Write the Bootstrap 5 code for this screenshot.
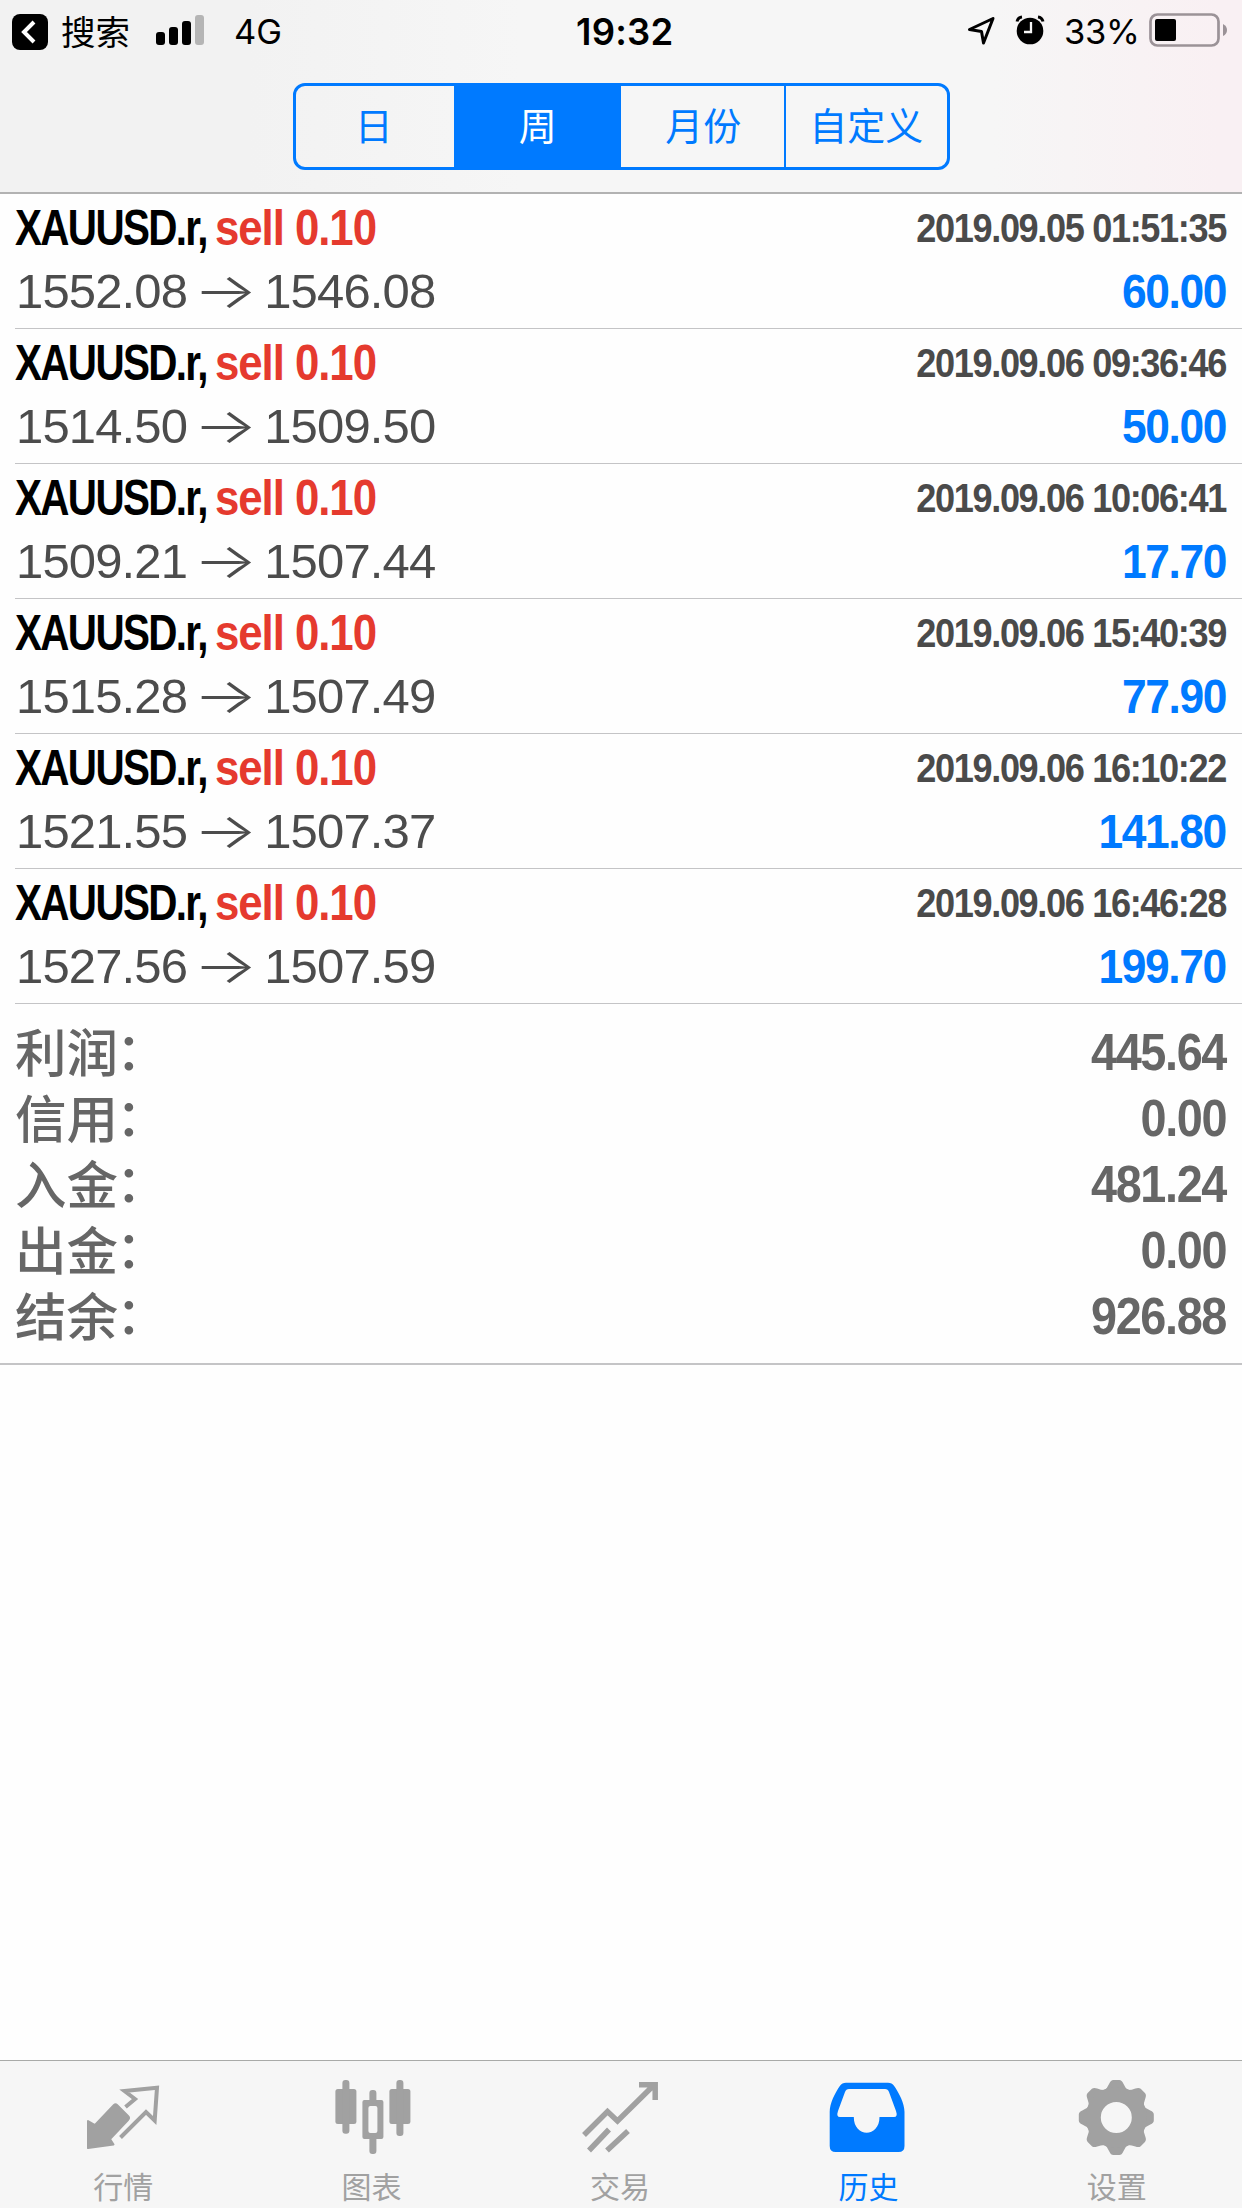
<!DOCTYPE html>
<html lang="zh-CN">
<head>
<meta charset="utf-8">
<meta name="viewport" content="width=device-width, initial-scale=1">
<title>历史</title>
<link href="https://cdn.jsdelivr.net/npm/bootstrap@5.3.0/dist/css/bootstrap.min.css" rel="stylesheet">
<style>
:root{--ios-blue:#007aff;--cjk:"Noto Sans CJK SC"}
body{background:#fefefe;color:#000;font-family:"Liberation Sans",var(--cjk),sans-serif;overflow:hidden}
.screen{width:1242px;height:2208px}
.topbar{height:194px;border-bottom:2px solid #b2b2b2;background:linear-gradient(90deg,#f2f2f2 0,#f2f2f2 20%,#f6f6f6 42%,#f6f6f6 80%,#f9f0f3 98%)}
.statusbar{height:64px;font-family:Inter,var(--cjk),sans-serif;font-size:35px;line-height:64px}
.statusbar svg{display:block;flex:none}
.back-label{font:400 34.5px/60px var(--cjk),sans-serif;width:94px;padding-left:12px;padding-bottom:4px}
.net{width:296px;padding-left:29px;font-size:34.500px}
.clock{font-size:36.500px;font-weight:600;width:390px;padding-left:75px;letter-spacing:.2px}
.pct{font-size:34.500px;width:84px;padding-left:3px;letter-spacing:-.3px}
.segments{width:657px;height:87px;margin-top:19px;border:3px solid var(--ios-blue);border-radius:12px;overflow:hidden}
.segments .btn{border:0;border-radius:0;padding:0;color:var(--ios-blue);font:400 38px/76px var(--cjk),sans-serif;height:81px;padding-bottom:5px}
.segments .btn.active{background:var(--ios-blue);color:#fff}
.segments .w1{width:160px;padding-right:2px}
.segments .w2{width:168px;padding-left:1px}
.segments .w3{width:165px;padding-left:2px}
.segments .w4{border-left:2px solid var(--ios-blue)!important;width:164px}
.deal{height:135px;margin-left:15px;padding-right:16px;border-bottom:1px solid #c4c4c6}
.line1{height:67px;line-height:68px}
.line2{height:58px;line-height:60px}
.squeeze{display:inline-block;white-space:nowrap;transform-origin:0 50%;font-weight:700}
.squeeze-end{transform-origin:100% 50%;margin-right:0}
.sym{width:200px;font-size:49.500px;letter-spacing:-2px}
.sym .squeeze{transform:scaleX(.816)}
.side{font-size:49.500px;color:#e53a2e;letter-spacing:-1.200px}
.side .squeeze{transform:scaleX(.885)}
.stamp{font-size:40px;color:#4a4a4a;letter-spacing:-1.500px;transform:scaleX(.903)}
.prices{font-size:49px;color:#4c4c4c;white-space:nowrap;letter-spacing:-.85px;padding-left:1px}
.arrow{display:inline-block;width:77px;text-align:center;font-family:Inter,sans-serif;font-weight:300;font-size:49px;line-height:50px;letter-spacing:0;transform:scaleX(1.380)}
.gain{font-size:49px;color:var(--ios-blue);letter-spacing:-1.500px;transform:scaleX(.905)}
.totals{height:361px;padding:15px 16px 0 15px;border-bottom:2px solid #c4c4c6;color:#666}
.total{height:66px;line-height:66px}
.total-name{font:500 51.5px/50px "Liberation Sans",var(--cjk),sans-serif;height:50px;margin-top:10px}
.colon{position:relative;left:-2px;top:-2px}
.total-sum{font-size:52px;letter-spacing:-1.500px;transform:scaleX(.9)}
.tabs{height:148px;border-top:1px solid #a9aaa8;background:#f6f6f6}
.tab-item{flex:1 1 0;color:#a1a1a1;font:400 30px/40px var(--cjk),sans-serif;padding-top:19px}
.tab-item span{margin-left:-2px}
.tab-item svg{display:block;width:80px;height:80px;margin-bottom:5px}
.tab-item.active{color:var(--ios-blue)}
</style>
<script src="https://cdn.jsdelivr.net/npm/bootstrap@5.3.0/dist/js/bootstrap.bundle.min.js"></script>
</head>
<body>
<div class="screen d-flex flex-column">
<header class="topbar flex-shrink-0 d-flex flex-column align-items-center">
  <div class="statusbar d-flex align-items-center w-100">
    <svg width="49" height="64"><rect x="12" y="14" width="36" height="36" rx="8"/><path d="M34 22 24 32l10 10" fill="none" stroke="#fff" stroke-width="4"/></svg>
    <span class="back-label">搜索</span>
    <svg width="62" height="64"><g transform="translate(-143)"><rect x="156" y="32" width="9" height="13" rx="3"/><rect x="169" y="27" width="9" height="18" rx="3"/><rect x="182" y="21" width="9" height="24" rx="3"/><rect x="195" y="15" width="9" height="30" rx="3" fill="#b5b5b5"/></g></svg>
    <span class="net">4G</span>
    <span class="clock">19:32</span>
    <svg class="ms-auto" width="96" height="64"><g transform="translate(-965)"><path d="M993 18.500 969.500 29.500 981.500 31.500 983.500 43z" fill="none" stroke="#000" stroke-width="3" stroke-linejoin="round"/><circle cx="1030" cy="31" r="13.3"/><path d="M1017 21.500q1-4 5-4.500M1043 21.500q-1-4-5-4.500" fill="none" stroke="#000" stroke-width="3"/><path d="M1031 22v10h-7" fill="none" stroke="#f6f6f6" stroke-width="2.3"/></g></svg>
    <span class="pct">33%</span>
    <svg width="97" height="64"><g transform="translate(-1145)"><rect x="1150.500" y="14.500" width="68" height="31" rx="7" fill="none" stroke="#9b9297" stroke-width="2.700"/><rect x="1155" y="19" width="21" height="22" rx="2"/><path d="M1223 24q4 2 4 6t-4 6z" fill="#9b9297"/></g></svg>
  </div>
  <div class="segments d-flex flex-shrink-0" role="group">
    <button class="btn w1">日</button><button class="btn active w2">周</button><button class="btn w3">月份</button><button class="btn w4">自定义</button>
  </div>
</header>
<main class="flex-grow-1">
  <div id="deals"></div>
  <section class="totals" id="totals"></section>
</main>
<nav class="tabs d-flex flex-shrink-0">
  <a class="tab-item d-flex flex-column align-items-center text-decoration-none"><svg viewBox="0 0 80 80"><path d="M4 41 11 45 30 25q1.500-1.500 3 0L44 36q2 2 0 4L26 59l3.500 5.500L4 68z" fill="currentColor" stroke="currentColor" stroke-width="2" stroke-linejoin="round"/><path d="M41.500 27 51 19 40.500 11 73 7.700 70.700 40.500 62 32 36.500 57.500" fill="none" stroke="currentColor" stroke-width="4"/></svg><span>行情</span></a>
  <a class="tab-item d-flex flex-column align-items-center text-decoration-none"><svg viewBox="0 0 80 80" fill="currentColor"><rect x="2.400" y="9" width="21" height="35" rx="2.500"/><rect x="9.400" width="7" height="53.700" rx="3"/><path fill-rule="evenodd" d="M31.400 20h17q2 0 2 2v35q0 2-2 2h-17q-2 0-2-2V22q0-2 2-2zm6 6q-2 0-2 2v23q0 2 2 2h5q2 0 2-2V28q0-2-2-2z"/><rect x="36.400" y="10" width="7" height="14" rx="3"/><rect x="36.400" y="56" width="7" height="18" rx="3"/><rect x="56.400" y="9" width="21" height="35" rx="2.500"/><rect x="63.400" width="7" height="56" rx="3"/></svg><span>图表</span></a>
  <a class="tab-item d-flex flex-column align-items-center text-decoration-none"><svg viewBox="0 0 80 80" fill="none" stroke="currentColor" stroke-width="5.500"><path d="M3 55 26.500 31.500l10 9.500L73 5M58 4.800h16.200V20M28 49.500 8 70.500M47 51 26 70.500"/></svg><span>交易</span></a>
  <a class="tab-item active d-flex flex-column align-items-center text-decoration-none"><svg viewBox="0 0 80 80"><path fill="currentColor" fill-rule="evenodd" d="M17 2.700h42q4 0 6 3C70 13 75.500 23 75.500 32v34q0 6-6 6H6.700q-6 0-6-6V32C.7 23 6 13 11 5.700q2-3 6-3zM20 9q-3 0-4 3L9 31q-2 6 2 6h13.800c0 21 25.700 21 25.700 0H65q4 0 2-6l-7-19q-1-3-4-3z"/></svg><span>历史</span></a>
  <a class="tab-item d-flex flex-column align-items-center text-decoration-none"><svg viewBox="0 0 80 80"><g transform="translate(38.300 37.500)"><g fill="currentColor" id="teeth"></g><circle r="23" fill="none" stroke="currentColor" stroke-width="15"/></g></svg><span>设置</span></a>
</nav>
</div>
<script>
const deals=[['1552.08','1546.08','2019.09.05 01:51:35','60.00'],['1514.50','1509.50','2019.09.06 09:36:46','50.00'],['1509.21','1507.44','2019.09.06 10:06:41','17.70'],['1515.28','1507.49','2019.09.06 15:40:39','77.90'],['1521.55','1507.37','2019.09.06 16:10:22','141.80'],['1527.56','1507.59','2019.09.06 16:46:28','199.70']];
document.getElementById('deals').innerHTML=deals.map(d=>`<article class="deal"><div class="line1 d-flex justify-content-between"><div class="d-flex"><span class="sym"><span class="squeeze">XAUUSD.r,</span></span><span class="side"><span class="squeeze">sell 0.10</span></span></div><span class="squeeze squeeze-end stamp">${d[2]}</span></div><div class="line2 d-flex justify-content-between"><span class="prices">${d[0]}<span class="arrow">→</span>${d[1]}</span><span class="squeeze squeeze-end gain">${d[3]}</span></div></article>`).join('');
const totals=[['利润','445.64'],['信用','0.00'],['入金','481.24'],['出金','0.00'],['结余','926.88']];
document.getElementById('totals').innerHTML=totals.map(t=>`<div class="total d-flex justify-content-between"><span class="total-name">${t[0]}<span class="colon">：</span></span><span class="squeeze squeeze-end total-sum">${t[1]}</span></div>`).join('');
document.getElementById('teeth').innerHTML=[...Array(8)].map((_,i)=>`<path transform="rotate(${i*45})" d="M-13-26Q-9-29-7-34-5.500-37.500-3-37.500H3Q5.500-37.500 7-34 9-29 13-26Z"/>`).join('');
</script>
</body>
</html>
